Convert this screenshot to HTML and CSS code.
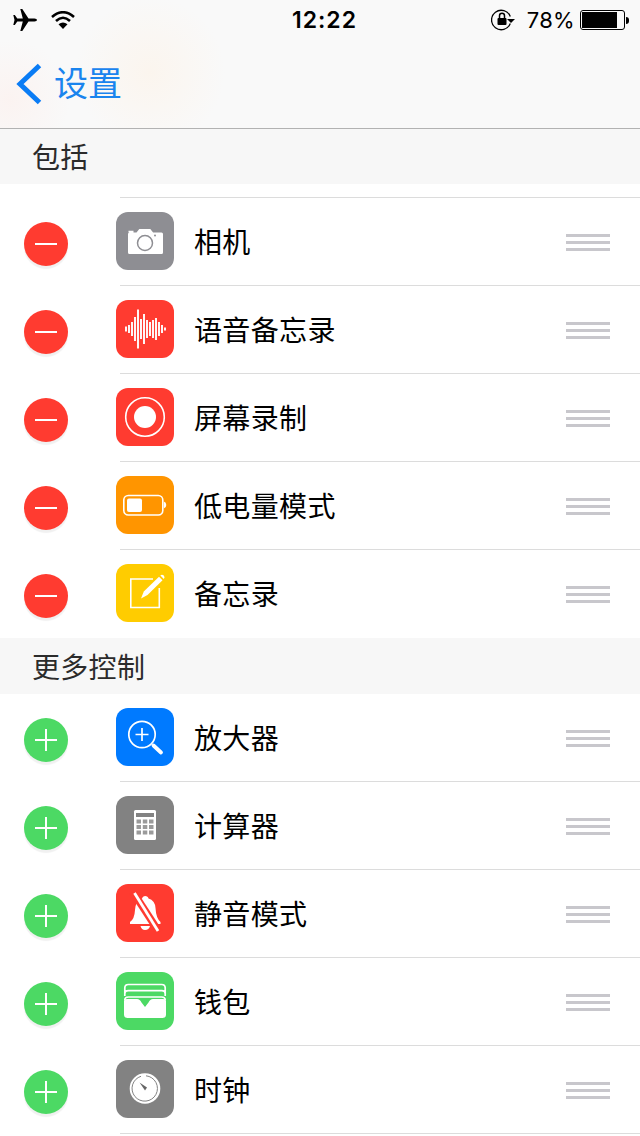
FILE: index.html
```html
<!DOCTYPE html>
<html lang="zh">
<head>
<meta charset="utf-8">
<title>包括</title>
<link rel="stylesheet" href="styles.css">
</head>
<body>
<header class="top">
  <div class="status">
    <div class="status-left">
      <svg class="plane" viewBox="0 0 24 22"><path d="M24 11 Q24 9.700 21.500 9.500 L15.500 9.500 L9.300 0 L7.300 0 L9.800 9.500 L4.300 9.500 L1.800 6 L0.300 6 L1.500 11 L0.300 16 L1.800 16 L4.300 12.500 L9.800 12.500 L7.300 22 L9.300 22 L15.500 12.500 L21.500 12.500 Q24 12.300 24 11 Z"/></svg>
      <svg class="wifi" viewBox="0 0 24 18"><path d="M1 6 Q12 -3.500 23 6" class="w"/><path d="M5 10 Q12 3.500 19 10" class="w"/><path d="M12 18 L7.500 13.200 Q12 9.800 16.500 13.200 Z"/></svg>
    </div>
    <div class="time">12:22</div>
    <div class="status-right">
      <svg class="lock" viewBox="0 0 24 22"><path d="M19.300 14.500 A9.700 9.700 0 1 1 19.300 7.500" class="ring"/><path d="M24 10 L20 14 L16 10 Z"/><rect x="6.500" y="9" width="9" height="7" rx="1"/><path d="M8.500 9 V6.800 a2.500 2.500 0 0 1 5 0 V9" class="shackle"/></svg>
      <span class="pct">78%</span>
      <div class="battery"><div class="battery-body"><div class="battery-fill"></div></div><div class="battery-tip"></div></div>
    </div>
  </div>
  <nav class="nav">
    <svg class="chevron" viewBox="0 0 26 42"><path d="M23.500 2.500 L4 21 L23.500 39.500"/></svg>
    <span class="back">设置</span>
  </nav>
</header>

<h2 class="section">包括</h2>
<div class="top-line"></div>
<ul class="list">
  <li class="row">
    <span class="btn del"><i class="bar-h"></i></span>
    <span class="app gray1"><svg viewBox="0 0 58 58"><path class="fill-w" d="M12.500 20.500 V18.800 h5 v1.700 h3 l2.800 -3.500 h11 l2.800 3.500 h8.400 q1.500 0 1.500 1.500 v18.500 q0 1.500 -1.500 1.500 h-32 q-1.500 0 -1.500 -1.500 v-18.500 q0 -1.500 1.500 -1.500 Z"/><circle cx="29" cy="31" r="7.500" fill="none" stroke="#8e8e93" stroke-width="1.500"/><circle cx="39" cy="23.500" r="1" fill="#8e8e93"/></svg></span>
    <span class="label">相机</span>
    <span class="handle"><i></i><i></i><i></i></span>
  </li>
  <li class="row">
    <span class="btn del"><i class="bar-h"></i></span>
    <span class="app red"><svg viewBox="0 0 58 58"><path class="st" stroke-width="1.900" d="M10 26.500v5M13 25v8M16 22v14M19 17v24M22 9.500v39M25 19v20M28 14v30M31 20v18M34 22v14M37 20v18M40 18v22M43 22v14M46 25v8M49 27.500v3"/></svg></span>
    <span class="label">语音备忘录</span>
    <span class="handle"><i></i><i></i><i></i></span>
  </li>
  <li class="row">
    <span class="btn del"><i class="bar-h"></i></span>
    <span class="app red"><svg viewBox="0 0 58 58"><circle cx="29" cy="29" r="19.300" fill="none" stroke="#fff" stroke-width="1.600"/><circle cx="29" cy="29" r="11" fill="#fff"/></svg></span>
    <span class="label">屏幕录制</span>
    <span class="handle"><i></i><i></i><i></i></span>
  </li>
  <li class="row">
    <span class="btn del"><i class="bar-h"></i></span>
    <span class="app orange"><svg viewBox="0 0 58 58"><rect x="7.800" y="19.500" width="39" height="19.500" rx="4.500" fill="none" stroke="#fff" stroke-width="1.600"/><rect x="11" y="22.500" width="15" height="13.500" rx="2" fill="#fff"/><path class="fill-w" d="M47.800 25.500 q2.500 .8 2.500 3.500 t-2.500 3.500 Z"/></svg></span>
    <span class="label">低电量模式</span>
    <span class="handle"><i></i><i></i><i></i></span>
  </li>
  <li class="row">
    <span class="btn del"><i class="bar-h"></i></span>
    <span class="app yellow"><svg viewBox="0 0 58 58"><path d="M43.300 24 V43.500 H14.800 V15 H37" fill="none" stroke="#fff" stroke-width="1.600"/><path class="fill-w" d="M25 34.500 L27.800 27.500 L43 12.800 L46.500 16.300 L31.500 31 Z"/><path class="fill-w" d="M44.300 11.500 Q46 10 47.800 11.500 Q49.300 13.300 47.800 15 Z"/></svg></span>
    <span class="label">备忘录</span>
    <span class="handle"><i></i><i></i><i></i></span>
  </li>
</ul>

<h2 class="section">更多控制</h2>
<ul class="list">
  <li class="row">
    <span class="btn add"><i class="bar-h"></i><i class="bar-v"></i></span>
    <span class="app blue"><svg viewBox="0 0 58 58"><circle cx="26" cy="26.500" r="13.200" fill="none" stroke="#fff" stroke-width="1.700"/><path class="st" stroke-width="1.700" d="M26 20v13M19.500 26.500h13"/><path class="st" stroke-width="3.800" stroke-linecap="round" d="M37.500 37.500L45 44.500"/></svg></span>
    <span class="label">放大器</span>
    <span class="handle"><i></i><i></i><i></i></span>
  </li>
  <li class="row">
    <span class="btn add"><i class="bar-h"></i><i class="bar-v"></i></span>
    <span class="app gray2"><svg viewBox="0 0 58 58"><rect x="18" y="14" width="22" height="30" rx="1.500" fill="#fff"/><rect x="20" y="17" width="18" height="4" fill="#828282"/><path d="M20.500 23.500h4.500v4h-4.500zM26.800 23.500h4.500v4h-4.500zM33 23.500h4.500v4h-4.500zM20.500 29h4.500v4h-4.500zM26.800 29h4.500v4h-4.500zM33 29h4.500v4h-4.500zM20.500 34.500h4.500v4h-4.500zM26.800 34.500h4.500v4h-4.500zM33 34.500h4.500v4h-4.500z" fill="#9a9a9a"/></svg></span>
    <span class="label">计算器</span>
    <span class="handle"><i></i><i></i><i></i></span>
  </li>
  <li class="row">
    <span class="btn add"><i class="bar-h"></i><i class="bar-v"></i></span>
    <span class="app red"><svg viewBox="0 0 58 58"><path class="fill-w" d="M29 12 Q32 12 32.500 14.500 Q39 16.500 39.500 24 Q40 34 44.500 38 L44.500 40 H14 V38 Q18.500 35 19 26 Q19 18 26 14.500 Q26.500 12 29 12 Z"/><path class="fill-w" d="M24.500 42 H34 Q33 46 29 46 Q25.500 46 24.500 42 Z"/><path d="M17 8 L43 48" stroke="#ff3b30" stroke-width="7.500" fill="none"/><path class="st" stroke-width="2.800" d="M18.500 9 L42 47"/></svg></span>
    <span class="label">静音模式</span>
    <span class="handle"><i></i><i></i><i></i></span>
  </li>
  <li class="row">
    <span class="btn add"><i class="bar-h"></i><i class="bar-v"></i></span>
    <span class="app green"><svg viewBox="0 0 58 58"><path class="fill-w" d="M8 29 q0 -2 3 -2 h10 q3 0 4.500 3.500 l3.500 4.500 l3.500 -4.500 q1.500 -3.500 4.500 -3.500 h10 q3 0 3 2 v13.500 q0 3.500 -3.500 3.500 h-35 q-3.500 0 -3.500 -3.500 Z"/><path d="M8.800 24 V16 q0 -3.500 3.500 -3.500 h33.400 q3.500 0 3.500 3.500 v8 M8.800 22 q0 -3.300 3.500 -3.300 h33.400 q3.500 0 3.500 3.300 M8.800 28 q0 -3 3.500 -3 h33.400 q3.500 0 3.500 3" fill="none" stroke="#fff" stroke-width="1.700"/></svg></span>
    <span class="label">钱包</span>
    <span class="handle"><i></i><i></i><i></i></span>
  </li>
  <li class="row">
    <span class="btn add"><i class="bar-h"></i><i class="bar-v"></i></span>
    <span class="app gray2"><svg viewBox="0 0 58 58"><circle cx="29" cy="28.500" r="15.300" fill="#fff"/><path d="M30 15.800 A12.700 12.700 0 1 1 25 16.300" fill="none" stroke="#828282" stroke-width="1"/><path d="M23.500 22.500 L31 27.500 L29 30.500 Z" fill="#666"/></svg></span>
    <span class="label">时钟</span>
    <span class="handle"><i></i><i></i><i></i></span>
  </li>
</ul>
</body>
</html>
```
FILE: styles.css
```css
* { box-sizing: border-box; }
html, body { margin: 0; padding: 0; }
body {
  width: 640px;
  height: 1136px;
  overflow: hidden;
  background: #fff;
  font-family: "Noto Sans CJK SC", "Noto Sans", sans-serif;
  color: #000;
}
.top {
  height: 129px;
  border-bottom: 1px solid #b2b2b2;
  background:
    radial-gradient(circle 75px at 150px 72px, #fbf5ee 0, rgba(251,245,238,0) 100%),
    radial-gradient(circle 60px at 10px 100px, #fbf3f1 0, rgba(251,243,241,0) 100%),
    #f9f9f9;
}
.status {
  height: 40px;
  display: flex;
  align-items: center;
  justify-content: space-between;
  padding: 0 11px 0 13px;
}
.status-left { display: flex; align-items: center; gap: 14px; width: 207px; }
.plane { width: 24px; height: 22px; fill: #000; }
.wifi { width: 24px; height: 18px; fill: #000; }
.wifi .w { fill: none; stroke: #000; stroke-width: 2.600; }
.time {
  font-family: Inter, sans-serif;
  font-size: 23px;
  font-weight: 600;
  line-height: 40px;
  letter-spacing: 1px;
}
.status-right { display: flex; align-items: center; width: 200px; justify-content: flex-end; }
.lock { width: 24px; height: 22px; fill: #000; margin-right: 12px; }
.lock .ring { fill: none; stroke: #000; stroke-width: 1.300; }
.lock .shackle { fill: none; stroke: #000; stroke-width: 1.500; }
.pct {
  font-family: Inter, sans-serif;
  font-size: 22px;
  line-height: 40px;
  letter-spacing: 0.3px;
  margin-right: 5px;
}
.battery { display: flex; align-items: center; }
.battery-body {
  width: 45px;
  height: 20px;
  border: 1px solid #000;
  border-radius: 3px;
  padding: 1px;
}
.battery-fill { width: 35px; height: 100%; background: #000; }
.battery-tip { width: 3px; height: 7px; background: #000; border-radius: 0 3px 3px 0; margin-left: 1px; }
.nav {
  height: 88px;
  display: flex;
  align-items: center;
  padding: 0 0 0 16px;
}
.chevron { width: 26px; height: 42px; fill: none; stroke: #0a7cf5; stroke-width: 5; }
.back { font-size: 34px; line-height: 80px; color: #1a84ee; margin: 0 0 4px 12px; }
.section {
  margin: 0;
  height: 56px;
  background: #f7f7f7;
  font-size: 28px;
  font-weight: 400;
  line-height: 56px;
  letter-spacing: 0.3px;
  padding-left: 32px;
  color: #2b2b2b;
}
.section:first-of-type { height: 55px; line-height: 55px; }
.top-line { height: 1px; margin: 13px 0 0 120px; background: #dcdcdc; }
.list { list-style: none; margin: 0; padding: 0; }
.row {
  position: relative;
  height: 88px;
  padding: 0 30px 2px 24px;
  display: flex;
  align-items: center;
}
.row::after {
  content: "";
  position: absolute;
  left: 120px;
  right: 0;
  bottom: 0;
  height: 1px;
  background: #dcdcdc;
}
.list:first-of-type .row:last-child::after { display: none; }
.btn {
  position: relative;
  flex: none;
  width: 44px;
  height: 44px;
  margin-top: 6px;
  border-radius: 50%;
  box-shadow: 0 3px 1px rgba(0, 0, 0, 0.06);
}
.del { background: #ff3b30; }
.add { background: #4cd964; }
.bar-h, .bar-v { position: absolute; background: #fff; }
.bar-h { left: 11px; top: 21px; width: 22px; height: 2px; }
.bar-v { left: 21px; top: 11px; width: 2px; height: 22px; }
.app {
  flex: none;
  width: 58px;
  height: 58px;
  margin-left: 48px;
  border-radius: 12px;
  overflow: hidden;
}
.app svg { display: block; width: 58px; height: 58px; }
.fill-w { fill: #fff; }
.st { stroke: #fff; fill: none; }
.gray1 { background: #8e8e93; }
.gray2 { background: #828282; }
.red { background: #ff3b30; }
.orange { background: #ff9500; }
.yellow { background: #ffcc00; }
.blue { background: #007aff; }
.green { background: #4cd964; }
.label {
  flex: 1;
  margin-left: 20px;
  font-size: 28px;
  line-height: 40px;
  letter-spacing: 0.35px;
}
.handle {
  flex: none;
  width: 44px;
  margin-top: 3px;
  display: flex;
  flex-direction: column;
  gap: 4px;
}
.handle i { display: block; height: 3px; background: #c8c7cc; }
```
